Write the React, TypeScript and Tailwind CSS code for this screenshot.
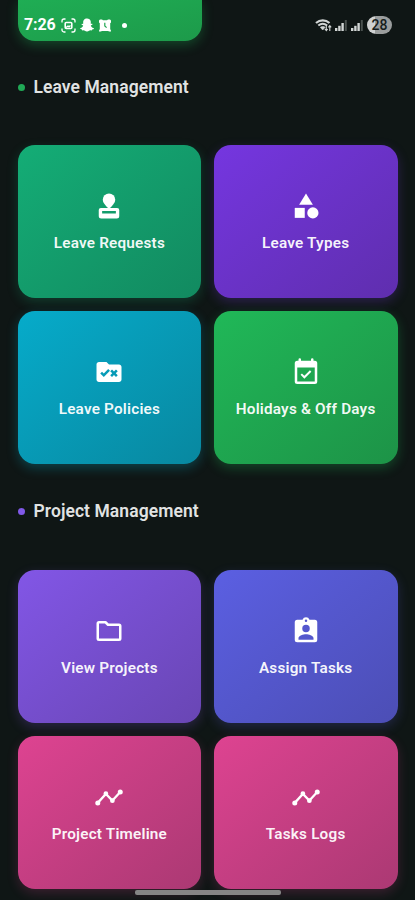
import type { ComponentType } from "react";
import { MdCategory, MdRuleFolder } from "react-icons/md";
import { FaSnapchatGhost } from "react-icons/fa";

type IconProps = { className?: string };

type Tile = {
  label: string;
  icon: ComponentType<IconProps>;
  color: string;
};

function StampIcon({ className }: IconProps) {
  return (
    <svg viewBox="0 0 24 24" className={className} fill="currentColor">
      <path d="M12 2a5 5 0 0 0-5 5c0 2.300 2 4.500 5 7.300 3-2.800 5-5 5-7.300a5 5 0 0 0-5-5z" />
      <path
        fillRule="evenodd"
        d="M5.500 13.500h13a1.700 1.700 0 0 1 1.700 1.700v4.800a2 2 0 0 1-2 2H5.800a2 2 0 0 1-2-2v-4.800a1.700 1.700 0 0 1 1.700-1.700zM6.500 16v2h11v-2z"
      />
    </svg>
  );
}

function CalendarCheckIcon({ className }: IconProps) {
  return (
    <svg viewBox="0 0 24 24" className={className} fill="currentColor">
      <path
        fillRule="evenodd"
        d="M7 1a1 1 0 0 1 1 1v1h8V2a1 1 0 0 1 2 0v1h1a2 2 0 0 1 2 2v14.500a2 2 0 0 1-2 2H5a2 2 0 0 1-2-2V5a2 2 0 0 1 2-2h1V2a1 1 0 0 1 1-1zM5 8.300v11.200h14V8.300z"
      />
      <path d="m8.200 13.700 2.500 2.500 5-5" fill="none" stroke="currentColor" strokeWidth="1.600" />
    </svg>
  );
}

function FolderIcon({ className }: IconProps) {
  return (
    <svg viewBox="0 0 24 24" className={className} fill="none" stroke="currentColor" strokeWidth="2" strokeLinejoin="round">
      <path d="M4 5h5.200l2 2H20a1 1 0 0 1 1 1v10a1 1 0 0 1-1 1H4a1 1 0 0 1-1-1V6a1 1 0 0 1 1-1z" />
    </svg>
  );
}

function AssignIcon({ className }: IconProps) {
  return (
    <svg viewBox="0 0 24 24" className={className} fill="currentColor">
      <path
        fillRule="evenodd"
        d="M19 3h-4.200a3 3 0 0 0-5.600 0H5a2 2 0 0 0-2 2v14a2 2 0 0 0 2 2h14a2 2 0 0 0 2-2V5a2 2 0 0 0-2-2zm-7-.2a1 1 0 0 1 0 2 1 1 0 0 1 0-2zM12 7a3 3 0 1 1 0 6 3 3 0 0 1 0-6zm6 12H6v-1.400c0-2 4-3.100 6-3.100s6 1.100 6 3.100z"
      />
    </svg>
  );
}

function TimelineIcon({ className }: IconProps) {
  return (
    <svg viewBox="0 0 24 24" className={className} fill="currentColor">
      <path d="m3 16.700 6.500-7.200 5.200 5.300L21 8" fill="none" stroke="currentColor" strokeWidth="1.800" />
      <circle cx="3" cy="16.700" r="2" />
      <circle cx="9.500" cy="9.300" r="1.900" />
      <circle cx="14.700" cy="14.900" r="1.900" />
      <circle cx="21" cy="8" r="2" />
    </svg>
  );
}

const leaveTiles: Tile[] = [
  {
    label: "Leave Requests",
    icon: StampIcon,
    color: "from-[#14ad76] to-[#128a60] shadow-[0_4px_12px_rgba(16,185,129,0.22)]",
  },
  {
    label: "Leave Types",
    icon: MdCategory,
    color: "from-[#7536e0] to-[#5f2eae] shadow-[0_4px_12px_rgba(124,58,237,0.25)]",
  },
  {
    label: "Leave Policies",
    icon: MdRuleFolder,
    color: "from-[#06abca] to-[#0888a0] shadow-[0_4px_12px_rgba(6,182,212,0.28)]",
  },
  {
    label: "Holidays & Off Days",
    icon: CalendarCheckIcon,
    color: "from-[#20b858] to-[#1d9347] shadow-[0_4px_12px_rgba(34,197,94,0.28)]",
  },
];

const projectTiles: Tile[] = [
  {
    label: "View Projects",
    icon: FolderIcon,
    color: "from-[#8256e6] to-[#6946b4] shadow-[0_4px_12px_rgba(139,92,246,0.22)]",
  },
  {
    label: "Assign Tasks",
    icon: AssignIcon,
    color: "from-[#5b5fe2] to-[#4c4eb5] shadow-[0_4px_12px_rgba(99,102,241,0.22)]",
  },
  {
    label: "Project Timeline",
    icon: TimelineIcon,
    color: "from-[#de4391] to-[#ab3973] shadow-[0_4px_12px_rgba(236,72,153,0.2)]",
  },
  {
    label: "Tasks Logs",
    icon: TimelineIcon,
    color: "from-[#de4391] to-[#ab3973] shadow-[0_4px_12px_rgba(236,72,153,0.2)]",
  },
];

function SignalBars() {
  return (
    <svg viewBox="0 0 13 12" className="h-3 w-[13px]" fill="#d2d6d5">
      <rect x="0" y="9" width="2.400" height="3" />
      <rect x="3.200" y="6.800" width="2.400" height="5.200" />
      <rect x="6.400" y="4" width="2.400" height="8" />
      <rect x="9.800" y="1" width="2" height="11" opacity="0.3" />
    </svg>
  );
}

function StatusBar() {
  return (
    <div className="absolute inset-x-0 top-0 z-10 flex h-[50px] items-center justify-between pl-6 pr-[23px] text-white">
      <div className="flex items-center">
        <span className="w-[37px] text-[16px] font-bold leading-none tracking-[-0.1px]">7:26</span>
        <svg viewBox="0 0 15 15" className="h-[15px] w-[15px]" fill="none" stroke="currentColor" strokeWidth="1.300">
          <path d="M1 4.500V3a2 2 0 0 1 2-2h1.500M10.500 1H12a2 2 0 0 1 2 2v1.500M14 10.500V12a2 2 0 0 1-2 2h-1.500M4.500 14H3a2 2 0 0 1-2-2v-1.500" />
          <rect x="4.200" y="4.500" width="6.600" height="6" rx="1" strokeWidth="1.600" />
          <path d="m5 9.500 2-1.500 1 .8 1.500-1.300" />
        </svg>
        <FaSnapchatGhost className="ml-[4px] h-[14px] w-[14px]" />
        <svg viewBox="0 0 12 13" className="ml-[5px] h-[13px] w-3">
          <path
            d="M0 1.500 1 .5h2l1 .7h4l1-.7h2l1 1v2l-.8.8v5.700l.8 1.700v.8h-2l-.8-.6H2.800l-.8.6H0v-.8L.8 10V4.300L0 3.500z"
            fill="currentColor"
          />
          <path d="M5.800 3.800v3.200L7.600 8.600" fill="none" stroke="#20a551" strokeWidth="1.200" />
        </svg>
        <span className="ml-[11px] h-[5px] w-[5px] rounded-full bg-white" />
      </div>
      <div className="flex items-center">
        <svg viewBox="0 0 17 13" className="h-[13px] w-[17px]" fill="none" stroke="#d2d6d5">
          <path d="M1 4c4-3.600 9.500-3.600 13.500 0" strokeWidth="2.200" />
          <path d="M3.300 6.500c2.700-2.200 6.200-2.200 8.900 0" strokeWidth="2" />
          <path d="M5.300 8.300c1.500-1.200 3.500-1.200 4.900 0L7.700 11z" fill="#d2d6d5" strokeWidth="0.600" />
          <path d="M11.300 6v5.500M9.900 10l1.400 1.700 1.400-1.700M14.800 12V6.500M13.400 8.300l1.400-1.700 1.400 1.700" strokeWidth="1.100" />
        </svg>
        <div className="ml-[3px] flex gap-[3px]">
          <SignalBars />
          <SignalBars />
        </div>
        <span className="ml-[3px] flex h-[18px] w-[25px] items-center justify-center rounded-full bg-[linear-gradient(90deg,#d0d2d2_30%,#9a9d9d_30%)] text-[14px] font-medium leading-none text-[#161c1b]">
          28
        </span>
      </div>
    </div>
  );
}

function SectionTitle({ title, dot }: { title: string; dot: string }) {
  return (
    <div className="flex h-6 items-center gap-[9px]">
      <span className={`h-[7px] w-[7px] rounded-full ${dot}`} />
      <h2 className="text-[17.500px] font-semibold leading-6 tracking-[0.07px] text-[#e1e3e3]">{title}</h2>
    </div>
  );
}

function TileGrid({ tiles }: { tiles: Tile[] }) {
  return (
    <div className="grid grid-cols-2 gap-x-[12.500px] gap-y-[13px]">
      {tiles.map(({ label, icon: Icon, color }) => (
        <div
          key={label}
          className={`flex h-[153px] flex-col items-center justify-center gap-[13px] rounded-[17px] bg-gradient-to-br pt-px ${color}`}
        >
          <Icon className="h-[30px] w-[30px] text-white" />
          <span className="whitespace-nowrap text-[15.300px] font-semibold leading-[19px] tracking-[0.2px] text-white/95">
            {label}
          </span>
        </div>
      ))}
    </div>
  );
}

function App() {
  return (
    <div className="relative h-[900px] w-full overflow-hidden bg-[#0f1615] font-['Roboto',sans-serif]">
      <StatusBar />
      <main className="px-[17.500px]">
        {/* bottom edge of a tile scrolled under the status bar */}
        <div className="h-[41px] w-[184px] rounded-b-[17px] bg-gradient-to-br from-[#1fad54] to-[#1d9a4a] shadow-[0_4px_12px_rgba(34,197,94,0.28)]" />
        <div className="pt-[34px]">
          <SectionTitle title="Leave Management" dot="bg-[#20a956]" />
        </div>
        <div className="pt-[46px]">
          <TileGrid tiles={leaveTiles} />
        </div>
        <div className="pt-[35px]">
          <SectionTitle title="Project Management" dot="bg-[#8059e8]" />
        </div>
        <div className="pt-[47px]">
          <TileGrid tiles={projectTiles} />
        </div>
      </main>
      <div className="absolute bottom-[5px] left-[135px] h-[5px] w-[146px] rounded-[2px] bg-[#858585]" />
    </div>
  );
}

export default App;
